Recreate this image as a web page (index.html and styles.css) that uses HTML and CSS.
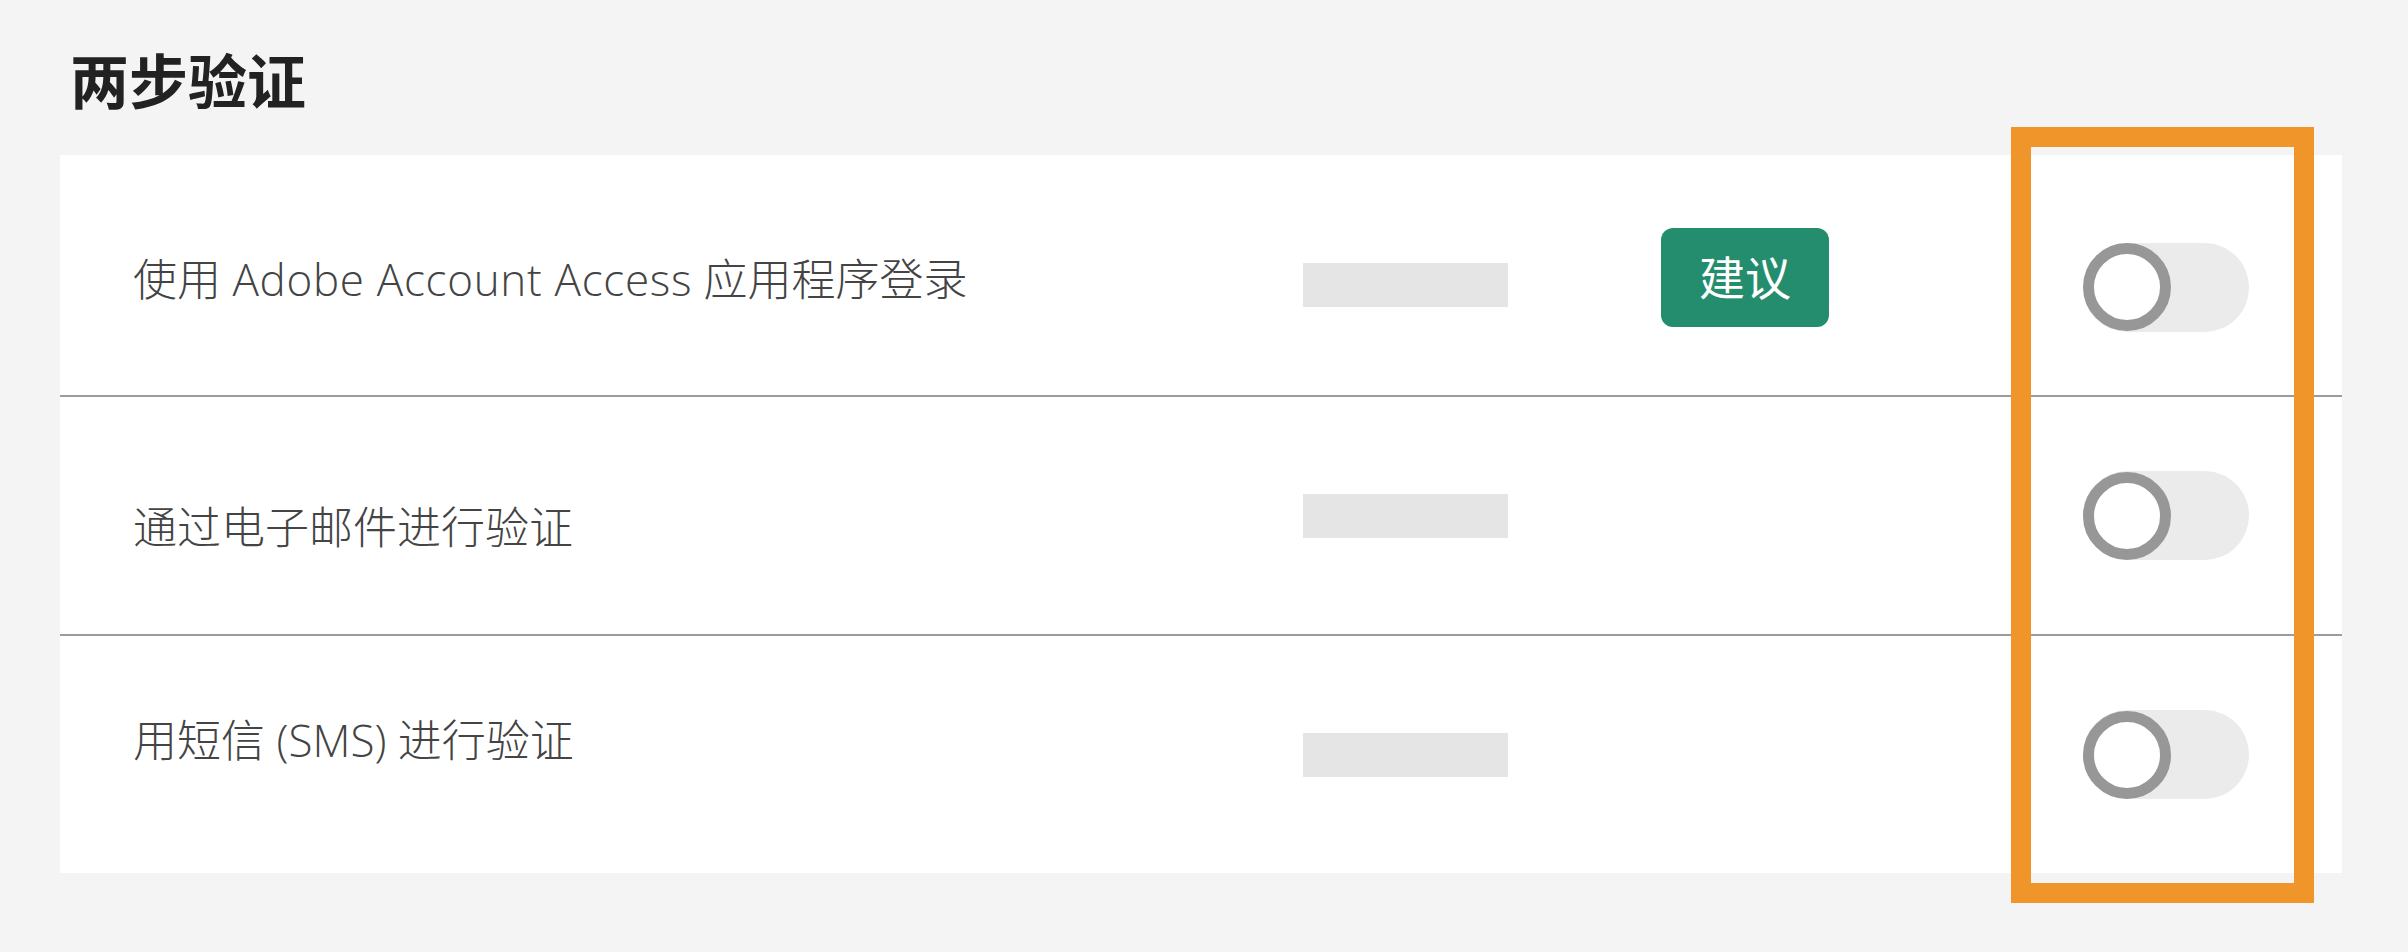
FILE: index.html
```html
<!DOCTYPE html>
<html lang="zh-CN">
<head>
<meta charset="utf-8">
<title>两步验证</title>
<link rel="stylesheet" href="styles.css">
</head>
<body>
<div class="page">
  <h1 class="title">两步验证</h1>
  <div class="card">
    <div class="row row--first">
      <span class="label label--r1">使用 <span class="latin">Adobe Account Access</span> 应用程序登录</span>
      <span class="placeholder placeholder--r1"></span>
      <span class="badge">建议</span>
      <span class="toggle"><span class="knob"></span></span>
    </div>
    <div class="row">
      <span class="label label--r2">通过电子邮件进行验证</span>
      <span class="placeholder"></span>
      <span class="toggle"><span class="knob"></span></span>
    </div>
    <div class="row">
      <span class="label label--r3">用短信 (SMS) 进行验证</span>
      <span class="placeholder"></span>
      <span class="toggle"><span class="knob"></span></span>
    </div>
  </div>
  <div class="highlight"></div>
</div>
</body>
</html>
```

FILE: styles.css
```css
html, body {
  margin: 0;
  padding: 0;
  background: #f4f4f4;
}

body {
  width: 2408px;
  height: 952px;
  overflow: hidden;
  font-family: "Open Sans", "Noto Sans CJK SC", sans-serif;
}

.page {
  position: relative;
  padding: 0 66px 0 60px;
}

.title {
  margin: 0 0 41px 0;
  padding: 44px 0 0 10px;
  font-family: "Noto Sans CJK SC", sans-serif;
  font-size: 59px;
  line-height: 70px;
  font-weight: 700;
  color: #222222;
}

.card {
  background: #ffffff;
  display: flex;
  flex-direction: column;
}

.row {
  box-sizing: border-box;
  height: 239px;
  border-top: 2px solid #9c9c9c;
  padding: 0 93px 0 73px;
  display: grid;
  grid-template-columns: 1170px 205px 1fr 166px;
  align-items: center;
}

.row--first {
  height: 240px;
  border-top: none;
  padding-top: 24px;
}

.label {
  grid-column: 1;
  font-size: 44px;
  line-height: 60px;
  font-weight: 300;
  color: #444444;
  white-space: nowrap;
}

.latin {
  letter-spacing: 0.7px;
}

.label--r1 { margin-bottom: 16px; }
.label--r2 { margin-top: 23px; }
.label--r3 { margin-bottom: 29px; }

.placeholder {
  grid-column: 2;
  height: 44px;
  background: #e5e5e5;
}

.placeholder--r1 { margin-bottom: 4px; }

.badge {
  grid-column: 3;
  justify-self: start;
  margin-left: 153px;
  margin-bottom: 19px;
  width: 168px;
  height: 99px;
  box-sizing: border-box;
  padding-bottom: 4px;
  border-radius: 12px;
  background: #248d6d;
  color: #ffffff;
  font-family: "Noto Sans CJK SC", sans-serif;
  font-size: 46px;
  line-height: 95px;
  text-align: center;
}

.toggle {
  grid-column: 4;
  width: 166px;
  height: 89px;
  border-radius: 45px;
  background: #ebebeb;
  display: flex;
  align-items: center;
}

.knob {
  box-sizing: border-box;
  width: 88px;
  height: 88px;
  border-radius: 50%;
  border: 11px solid #979797;
  background: #ffffff;
}

.highlight {
  position: absolute;
  left: 2011px;
  top: 127px;
  width: 303px;
  height: 776px;
  box-sizing: border-box;
  border: 20px solid #f0952a;
}
```
